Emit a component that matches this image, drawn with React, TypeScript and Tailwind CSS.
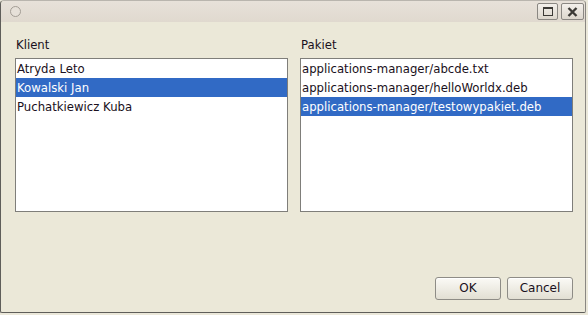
import React from 'react';

const clients = ['Atryda Leto', 'Kowalski Jan', 'Puchatkiewicz Kuba'];
const packages = [
  'applications-manager/abcde.txt',
  'applications-manager/helloWorldx.deb',
  'applications-manager/testowypakiet.deb',
];

interface ListProps {
  label: string;
  items: string[];
  selected: number;
}

const ListBox: React.FC<ListProps> = ({ label, items, selected }) => (
  <div className="flex flex-col">
    <div className="h-[16px] leading-[16px] mb-[5px] pl-[1px]">{label}</div>
    <div className="h-[154px] border border-[#7f7e7a] bg-white">
      {items.map((it, i) => (
        <div
          key={it}
          className={`h-[19px] pt-[1px] leading-[18px] pl-[1px] whitespace-nowrap ${
            i === selected ? 'bg-[#316ac5] text-white' : ''
          }`}
        >
          {it}
        </div>
      ))}
    </div>
  </div>
);

const DialogButton: React.FC<{ children: React.ReactNode }> = ({ children }) => (
  <button className="w-[66px] h-[23px] rounded-[3px] border border-[#8e8c86] bg-gradient-to-b from-[#fbfaf6] to-[#e2dfd3] text-[12px] leading-[21px] text-[#1a1020] shadow-[inset_0_1px_0_#fff]">
    {children}
  </button>
);

export default function App() {
  return (
    <div
      className="w-[588px] h-[315px] bg-[#ebe8da] text-[11.7px] text-[#1a1020]"
      style={{ fontFamily: '"DejaVu Sans", Verdana, sans-serif' }}
    >
      <div className="w-[586px] h-[313px] flex flex-col bg-[#ebe8d8] border-x border-b border-t border-l-[#5f5e5a] border-r-[#8a8782] border-b-[#5f5e5a] border-t-[#b9b5ae] rounded-tl-[4px] rounded-tr-[4px] rounded-bl-[2px] rounded-br-[2px]">
        {/* title bar */}
        <div className="h-[21px] flex items-center justify-between bg-gradient-to-b from-[#e7e1d9] to-[#e0d9cf] rounded-t-[4px]">
          <div className="ml-[9px] w-[11px] h-[11px] rounded-full border border-[#a39d95] bg-[#e6e0d8]" />
          <div className="flex gap-[3px] mr-[1px]">
            <div className="w-[21px] h-[17px] rounded-[2px] border border-[#8a8782] bg-gradient-to-b from-[#f3f0eb] to-[#ddd7cd] flex items-center justify-center">
              <div className="w-[10px] h-[9px] border border-[#3c3a36] border-t-2" />
            </div>
            <div className="w-[23px] h-[17px] rounded-[2px] border border-[#8a8782] bg-gradient-to-b from-[#f3f0eb] to-[#ddd7cd] flex items-center justify-center">
              <svg width="11" height="10" viewBox="0 0 11 10">
                <path d="M1.5 1 L9.5 9 M9.5 1 L1.5 9" stroke="#3c3a36" strokeWidth="2.4" />
              </svg>
            </div>
          </div>
        </div>
        {/* body */}
        <div className="flex-1 flex flex-col pt-[15px] pl-[14px] pr-[12px] pb-[12px]">
          <div className="grid grid-cols-[273px_273px] gap-x-[12px]">
            <ListBox label="Klient" items={clients} selected={1} />
            <ListBox label="Pakiet" items={packages} selected={2} />
          </div>
          <div className="flex-1" />
          <div className="flex justify-end gap-[6px]">
            <DialogButton>OK</DialogButton>
            <DialogButton>Cancel</DialogButton>
          </div>
        </div>
      </div>
    </div>
  );
}
